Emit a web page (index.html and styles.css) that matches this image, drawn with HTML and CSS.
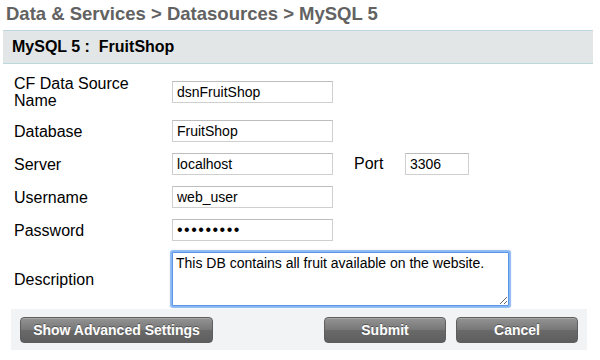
FILE: index.html
```html
<!DOCTYPE html>
<html lang="en">
<head>
  <meta charset="UTF-8">
  <title>MySQL 5 Datasource</title>
  <link rel="stylesheet" href="styles.css">
</head>
<body>
  <h1 class="crumbs">Data &amp; Services &gt; Datasources &gt; MySQL 5</h1>

  <div class="panel">
    <div class="panel-head">MySQL 5 :&nbsp; FruitShop</div>

    <form class="dsn-form">
      <div class="row">
        <label class="lbl lbl-wrap" for="dsn">CF Data Source Name</label>
        <input id="dsn" type="text" value="dsnFruitShop">
      </div>
      <div class="row">
        <label class="lbl" for="db">Database</label>
        <input id="db" type="text" value="FruitShop">
      </div>
      <div class="row">
        <label class="lbl" for="server">Server</label>
        <input id="server" type="text" value="localhost">
        <label class="lbl-port" for="port">Port</label>
        <input id="port" class="port" type="text" value="3306">
      </div>
      <div class="row">
        <label class="lbl" for="user">Username</label>
        <input id="user" type="text" value="web_user">
      </div>
      <div class="row">
        <label class="lbl" for="pass">Password</label>
        <input id="pass" class="pass" type="password" value="123456789">
      </div>
      <div class="row">
        <label class="lbl" for="desc">Description</label>
        <textarea id="desc" spellcheck="false">This DB contains all fruit available on the website.</textarea>
      </div>
    </form>

    <div class="btn-bar">
      <button class="btn btn-wide">Show Advanced Settings</button>
      <div class="btn-group">
        <button class="btn">Submit</button>
        <button class="btn">Cancel</button>
      </div>
    </div>
  </div>
</body>
</html>
```

FILE: styles.css
```css
* {
  margin: 0;
  padding: 0;
  box-sizing: border-box;
}

body {
  font-family: "Liberation Sans", Arial, sans-serif;
  background: #ffffff;
  color: #000000;
  width: 600px;
  height: 360px;
  overflow: hidden;
}

.crumbs {
  font-size: 18.5px;
  font-weight: 700;
  color: #626262;
  line-height: 22px;
  padding: 3px 6px 4px 6px;
}

.panel {
  margin: 1px 7px 0 3px;
}

.panel-head {
  height: 34px;
  background: #e3e6e7;
  border-top: 1px solid #bcd8dd;
  border-bottom: 1px solid #bcd8dd;
  font-size: 16px;
  font-weight: 700;
  line-height: 32px;
  padding-left: 9px;
}

.dsn-form {
  display: flex;
  flex-direction: column;
  gap: 11px;
  padding: 11px 0 0 11px;
}

.row {
  display: flex;
  align-items: center;
}

.lbl {
  width: 158px;
  font-size: 16px;
  line-height: 17px;
}

.lbl-wrap {
  padding-right: 30px;
}

.lbl-port {
  font-size: 16px;
  margin-left: 21px;
  width: 51px;
}

input {
  width: 161px;
  height: 22px;
  border: 1px solid #cfcfcf;
  border-top-color: #bdbdbd;
  font-family: "Liberation Sans", Arial, sans-serif;
  font-size: 14px;
  padding: 0 4px;
  color: #000;
  outline: none;
}

input.port {
  width: 64px;
}

input.pass {
  font-size: 16px;
  letter-spacing: 1.5px;
}

textarea {
  width: 337px;
  height: 54px;
  border: 1px solid #5b95e6;
  box-shadow: 0 0 1px 2px #8ab8f2;
  border-radius: 1px;
  font-family: "Liberation Sans", Arial, sans-serif;
  font-size: 14px;
  line-height: 17px;
  padding: 2px 3px;
  color: #000;
  outline: none;
}

.btn-bar {
  display: flex;
  justify-content: space-between;
  align-items: center;
  margin: 3px 6px 0 8px;
  padding: 8px 9px 7px 9px;
  background: #f1f3f4;
}

.btn-group {
  display: flex;
  gap: 10px;
}

.btn {
  width: 122px;
  height: 26px;
  border: 1px solid #5e5e5e;
  border-radius: 4px;
  background: linear-gradient(#939393, #777777 50%, #696969 51%, #5e5e5e);
  color: #ffffff;
  font-family: "Liberation Sans", Arial, sans-serif;
  font-size: 14px;
  font-weight: 700;
  text-shadow: 0 -1px 0 rgba(0, 0, 0, 0.35);
  box-shadow: inset 0 1px 0 rgba(255, 255, 255, 0.2);
  cursor: pointer;
}

.btn-wide {
  width: 193px;
}
```
